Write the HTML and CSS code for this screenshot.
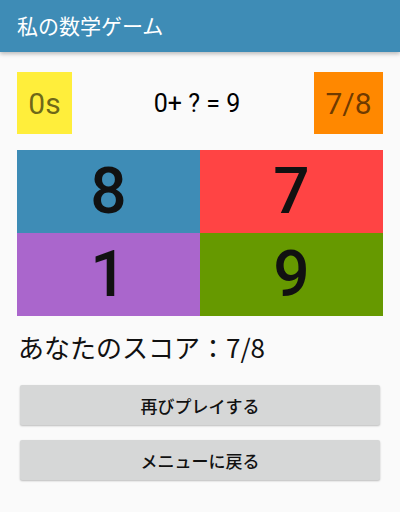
FILE: index.html
```html
<!DOCTYPE html>
<html>
<head>
  <meta charset="UTF-8">
  <link rel="stylesheet" href="styles.css">
</head>
<body>
  <div class="app-bar">私の数学ゲーム</div>

  <div class="content">
    <div class="status-row">
      <div class="timer">0s</div>
      <div class="question">0+ ? = 9</div>
      <div class="progress">7/8</div>
    </div>

    <div class="answers">
      <div class="answer blue">8</div>
      <div class="answer red">7</div>
      <div class="answer purple">1</div>
      <div class="answer green">9</div>
    </div>

    <div class="score">あなたのスコア：7/8</div>

    <div class="actions">
      <button class="btn">再びプレイする</button>
      <button class="btn">メニューに戻る</button>
    </div>
  </div>
</body>
</html>
```

FILE: styles.css
```css
:root {
  --primary-color: #3e8cb6;
  --text-primary: #111;
  --background: #fafafa;
  --button-color: #d6d7d7;
}

body {
  margin: 0;
  width: 400px;
  height: 512px;
  overflow: hidden;
  background: var(--background);
  font-family: Roboto, "Noto Sans CJK JP", sans-serif;
  color: var(--text-primary);
}

.app-bar {
  height: 52px;
  background: var(--primary-color);
  color: #fff;
  font-size: 21px;
  line-height: 54px;
  padding-left: 17px;
  box-shadow: 0 2px 4px rgba(0, 0, 0, 0.25);
  position: relative;
}

.content {
  padding: 20px 17px 0 17px;
}

.status-row {
  display: flex;
  align-items: center;
  justify-content: space-between;
  height: 62px;
}

.timer,
.progress {
  height: 62px;
  display: flex;
  align-items: center;
  justify-content: center;
  font-size: 30px;
  color: rgba(0, 0, 0, 0.58);
}

.timer {
  width: 55px;
  background: #ffee3b;
}

.progress {
  width: 69px;
  background: #ff8800;
}

.question {
  font-size: 25px;
  color: #000;
  padding-left: 8px;
}

.answers {
  margin-top: 16px;
  display: grid;
  grid-template-columns: 1fr 1fr;
  grid-template-rows: 83px 83px;
  width: 366px;
}

.answer {
  display: flex;
  align-items: center;
  justify-content: center;
  font-size: 64px;
  font-weight: 500;
  color: #111;
}

.blue { background: #3e8cb6; }
.red { background: #ff4444; }
.purple { background: #aa66cc; }
.green { background: #669900; }

.score {
  margin-top: 12px;
  font-size: 26px;
  font-family: "Noto Sans CJK JP", sans-serif;
  color: #111;
  padding-left: 1px;
}

.actions {
  margin-top: 20px;
  padding: 0 3px;
  display: flex;
  flex-direction: column;
  gap: 15px;
}

.btn {
  height: 40px;
  border: none;
  border-radius: 2px;
  background: var(--button-color);
  box-shadow: 0 1px 2px rgba(0, 0, 0, 0.25);
  font-family: "Noto Sans CJK JP", sans-serif;
  font-size: 17px;
  font-weight: 500;
  color: #111;
}
```
